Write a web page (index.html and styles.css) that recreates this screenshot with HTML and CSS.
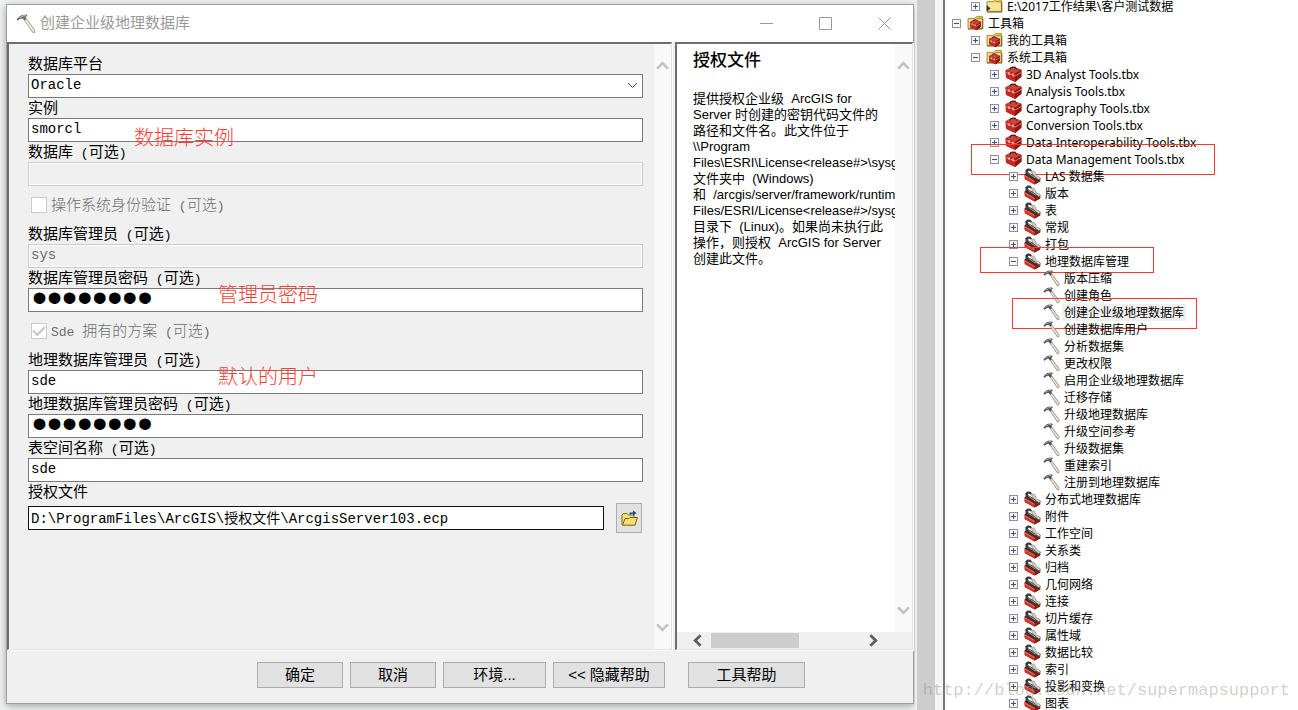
FILE: index.html
```html
<!DOCTYPE html>
<html lang="zh-CN">
<head>
<meta charset="utf-8">
<title>创建企业级地理数据库</title>
<link rel="stylesheet" href="styles.css">
</head>
<body>
<svg class="sprite" aria-hidden="true">
  <symbol id="i-hammer" viewBox="0 0 17 17">
    <path d="M7 5 8.8 4 16 13.6 15.9 15.6 14.4 15.9Z" fill="#d9cfb8" stroke="#857d6e" stroke-width=".7"/>
    <path d="M8.3 5.4 15 14.6" stroke="#f6f0df" stroke-width=".9"/>
    <path d="M.4 4.8C1.6 3 3.4 1.2 5.4.8L9.2.4 9.8 1.8 8.4 2.4 8.8 4.2 7.2 5.6 5.4 3.8 3 4.4 1.6 5.8Z" fill="#4c5256"/>
    <path d="M2.8 3.2 5.6 1.8 8.4 1.3" stroke="#b4babd" stroke-width=".8" fill="none"/>
  </symbol>
  <symbol id="i-box" viewBox="0 0 17 17">
    <path d="M.6 4.2 7.6.6 16.4 3.8V10.8L10.2 16 1 11.8Z" fill="#b3211a"/>
    <path d="M.6 4.2 7.6.8 16.4 3.8 10.2 7.4Z" fill="#cf4438"/>
    <path d="M.6 4.2 10.2 7.4V16L1 11.8Z" fill="#c5281f"/>
    <path d="M10.2 7.4 16.4 3.8V10.8L10.2 16Z" fill="#8c1610"/>
    <path d="M.8 6.4 10.2 10 16.4 6.4" stroke="#ee8a7c" stroke-width=".9" fill="none"/>
    <path d="M5 3.8 5.8 1.6 10 1.2 11.8 3.6" stroke="#3a2a2a" stroke-width="1.1" fill="none"/>
    <path d="M4 6V9M8 7.4V10.4" stroke="#e8dcd8" stroke-width="1"/>
  </symbol>
  <symbol id="i-set" viewBox="0 0 17 17">
    <path d="M.6 6 4 4.2 16.2 10.4V13.4L10.6 16.6.8 11Z" fill="#5a2521"/>
    <path d="M.6 6.8 10.8 12.8V16.5L.8 11.2Z" fill="#cf3426"/>
    <path d="M10.8 12.8 16.2 10V13.2L10.8 16.5Z" fill="#8e1b13"/>
    <path d="M1.2 2.4 3.4.6 6.6.8 8 2.8 6.4 3.6 4.8 2.6 3.6 4.2 14.6 11.2 12.4 12.4 2 6.4Z" fill="#34383a"/>
    <path d="M7.4 3.4 9.8 3 11.4 5.2 12.4 8 15.8 9.2 16.4 10.8 14.6 11.6 12.2 9.8 9 6.8Z" fill="#d8d2c2" stroke="#77736a" stroke-width=".6"/>
    <path d="M4.4 5.2 11.4 10" stroke="#a9adad" stroke-width=".9"/>
    <path d="M1 8 10.6 13.6" stroke="#f08c7d" stroke-width=".7"/>
  </symbol>
  <symbol id="i-folder" viewBox="0 0 17 17">
    <path d="M1 3.4H8L9.4 1.4H15.4V13.6H1Z" fill="#eed26c" stroke="#a68a34" stroke-width=".9"/>
    <path d="M2 5H14.6V12.6H2Z" fill="#f6e498"/>
    <path d="M9.6 3.4H15" stroke="#a98b2c"/>
    <path d="M1 14H15.8V4" stroke="#6f5d24" fill="none"/>
  </symbol>
  <symbol id="i-link" viewBox="0 0 17 17">
    <use href="#i-folder"/>
    <path d="M.6 7 4.6 10.4 .6 13.6Z" fill="#333"/>
  </symbol>
  <symbol id="i-folderbox" viewBox="0 0 17 17">
    <use href="#i-folder"/>
    <use href="#i-box" x="2" y="4" width="13" height="12"/>
  </symbol>
  <symbol id="i-up" viewBox="0 0 13 9"><path d="M1.2 7.6 6.5 2.2 11.8 7.6" fill="none" stroke="currentColor" stroke-width="2.6"/></symbol>
  <symbol id="i-left" viewBox="0 0 9 13"><path d="M7.6 1.2 2.2 6.5 7.6 11.8" fill="none" stroke="currentColor" stroke-width="2.8"/></symbol>
</svg>

<main class="backdrop">
  <section class="dialog" aria-label="创建企业级地理数据库">
    <header class="titlebar">
      <svg class="title-icon"><use href="#i-hammer"/></svg>
      <h1 class="title">创建企业级地理数据库</h1>
      <div class="controls">
        <button type="button" class="ctl" aria-label="最小化"><svg viewBox="0 0 13 13"><path d="M0 6.5H13"/></svg></button>
        <button type="button" class="ctl" aria-label="最大化"><svg viewBox="0 0 13 13"><path d="M.5.5H12.5V12.5H.5Z"/></svg></button>
        <button type="button" class="ctl" aria-label="关闭"><svg viewBox="0 0 13 13"><path d="M.5.5 12.5 12.5M12.5.5.5 12.5"/></svg></button>
      </div>
    </header>

    <div class="panes">
      <div class="pane pane-form">
        <form class="form" id="tool">
          <div class="field">
            <label for="platform">数据库平台</label>
            <div class="select">
              <select id="platform"><option>Oracle</option></select>
              <svg class="chevron" viewBox="0 0 11 7"><path d="M1 1 5.5 5.5 10 1"/></svg>
            </div>
          </div>
          <div class="field">
            <label for="instance">实例</label>
            <input id="instance" type="text" value="smorcl">
            <span class="note note-near">数据库实例</span>
          </div>
          <div class="field">
            <label for="db">数据库<span class="opt"> (</span>可选<span class="opt">)</span></label>
            <input id="db" type="text" disabled>
          </div>
          <div class="check">
            <input id="osauth" type="checkbox" disabled>
            <label for="osauth">操作系统身份验证<span class="opt"> (</span>可选<span class="opt">)</span></label>
          </div>
          <div class="field">
            <label for="dba">数据库管理员<span class="opt"> (</span>可选<span class="opt">)</span></label>
            <input id="dba" type="text" value="sys" disabled>
          </div>
          <div class="field">
            <label for="dbapw">数据库管理员密码<span class="opt"> (</span>可选<span class="opt">)</span></label>
            <input id="dbapw" type="password" value="password">
            <span class="note note-far">管理员密码</span>
          </div>
          <div class="check">
            <input id="sdeschema" type="checkbox" checked disabled>
            <label for="sdeschema"><span class="opt">Sde </span>拥有的方案<span class="opt"> (</span>可选<span class="opt">)</span></label>
          </div>
          <div class="field">
            <label for="gdba">地理数据库管理员<span class="opt"> (</span>可选<span class="opt">)</span></label>
            <input id="gdba" type="text" value="sde">
            <span class="note note-far">默认的用户</span>
          </div>
          <div class="field">
            <label for="gdbapw">地理数据库管理员密码<span class="opt"> (</span>可选<span class="opt">)</span></label>
            <input id="gdbapw" type="password" value="password">
          </div>
          <div class="field">
            <label for="tablespace">表空间名称<span class="opt"> (</span>可选<span class="opt">)</span></label>
            <input id="tablespace" type="text" value="sde">
          </div>
          <div class="field">
            <label for="authfile">授权文件</label>
            <div class="file">
              <input id="authfile" class="active" type="text" value="D:\ProgramFiles\ArcGIS\授权文件\ArcgisServer103.ecp">
              <button type="button" class="browse" aria-label="浏览">
                <svg viewBox="0 0 17 17">
                  <path d="M1 15V5L2.5 3.5H6L7.5 5H13V8" fill="#f3dc7c" stroke="#8b6d12"/>
                  <path d="M1.5 15.2 4 8.5H8L9 7.5H16.4L14 15.2Z" fill="#f5dc73" stroke="#7a5d0b"/>
                  <path d="M8.5 4.5V2.5H12V.5L15.5 3 12 5.8V3.8" fill="#0d4d8c"/>
                </svg>
              </button>
            </div>
          </div>
        </form>
        <div class="vbar">
          <svg class="arr"><use href="#i-up"/></svg>
          <svg class="arr flip"><use href="#i-up"/></svg>
        </div>
      </div>

      <aside class="pane pane-help">
        <div class="help-main">
          <article class="help">
            <h2>授权文件</h2>
            <p>提供授权企业级&nbsp; ArcGIS for<br>Server 时创建的密钥代码文件的<br>路径和文件名。此文件位于<br>\\Program<br>Files\ESRI\License&lt;release#&gt;\sysgen<br>文件夹中&nbsp; (Windows)<br>和&nbsp; /arcgis/server/framework/runtime/<br>Files/ESRI/License&lt;release#&gt;/sysgen<br>目录下&nbsp; (Linux)。如果尚未执行此<br>操作，则授权&nbsp; ArcGIS for Server<br>创建此文件。</p>
          </article>
          <div class="vbar">
            <svg class="arr"><use href="#i-up"/></svg>
            <svg class="arr flip"><use href="#i-up"/></svg>
          </div>
        </div>
        <div class="hbar">
          <svg class="harr"><use href="#i-left"/></svg>
          <div class="track"><div class="thumb"></div></div>
          <svg class="harr flip"><use href="#i-left"/></svg>
        </div>
      </aside>
    </div>

    <footer class="footer">
      <button type="submit" form="tool" class="btn">确定</button>
      <button type="button" class="btn">取消</button>
      <button type="button" class="btn btn-env">环境...</button>
      <button type="button" class="btn btn-hide">&lt;&lt; 隐藏帮助</button>
      <button type="button" class="btn btn-help">工具帮助</button>
    </footer>
  </section>
</main>

<div class="splitter"></div>

<nav class="catalog" aria-label="目录">
  <ul class="tree">
    <li><ul>
      <li><div class="row"><button class="exp plus" aria-label="展开"></button><svg class="ico"><use href="#i-link"/></svg>E:\2017工作结果\客户测试数据</div></li>
    </ul></li>
    <li><div class="row"><button class="exp" aria-label="折叠"></button><svg class="ico"><use href="#i-folderbox"/></svg>工具箱</div>
    <ul>
      <li><div class="row"><button class="exp plus" aria-label="展开"></button><svg class="ico"><use href="#i-folderbox"/></svg>我的工具箱</div></li>
      <li><div class="row"><button class="exp" aria-label="折叠"></button><svg class="ico"><use href="#i-folderbox"/></svg>系统工具箱</div>
      <ul>
        <li><div class="row"><button class="exp plus" aria-label="展开"></button><svg class="ico"><use href="#i-box"/></svg>3D Analyst Tools.tbx</div></li>
        <li><div class="row"><button class="exp plus" aria-label="展开"></button><svg class="ico"><use href="#i-box"/></svg>Analysis Tools.tbx</div></li>
        <li><div class="row"><button class="exp plus" aria-label="展开"></button><svg class="ico"><use href="#i-box"/></svg>Cartography Tools.tbx</div></li>
        <li><div class="row"><button class="exp plus" aria-label="展开"></button><svg class="ico"><use href="#i-box"/></svg>Conversion Tools.tbx</div></li>
        <li><div class="row"><button class="exp plus" aria-label="展开"></button><svg class="ico"><use href="#i-box"/></svg>Data Interoperability Tools.tbx</div></li>
        <li><div class="row"><button class="exp" aria-label="折叠"></button><svg class="ico"><use href="#i-box"/></svg>Data Management Tools.tbx<span class="mark mark-toolbox"></span></div>
        <ul>
          <li><div class="row"><button class="exp plus" aria-label="展开"></button><svg class="ico"><use href="#i-set"/></svg>LAS 数据集</div></li>
          <li><div class="row"><button class="exp plus" aria-label="展开"></button><svg class="ico"><use href="#i-set"/></svg>版本</div></li>
          <li><div class="row"><button class="exp plus" aria-label="展开"></button><svg class="ico"><use href="#i-set"/></svg>表</div></li>
          <li><div class="row"><button class="exp plus" aria-label="展开"></button><svg class="ico"><use href="#i-set"/></svg>常规</div></li>
          <li><div class="row"><button class="exp plus" aria-label="展开"></button><svg class="ico"><use href="#i-set"/></svg>打包</div></li>
          <li><div class="row"><button class="exp" aria-label="折叠"></button><svg class="ico"><use href="#i-set"/></svg>地理数据库管理<span class="mark mark-set"></span></div>
          <ul class="tools">
            <li><div class="row"><svg class="ico"><use href="#i-hammer"/></svg>版本压缩</div></li>
            <li><div class="row"><svg class="ico"><use href="#i-hammer"/></svg>创建角色</div></li>
            <li><div class="row"><svg class="ico"><use href="#i-hammer"/></svg><span class="selected">创建企业级地理数据库</span><span class="mark mark-tool"></span></div></li>
            <li><div class="row"><svg class="ico"><use href="#i-hammer"/></svg>创建数据库用户</div></li>
            <li><div class="row"><svg class="ico"><use href="#i-hammer"/></svg>分析数据集</div></li>
            <li><div class="row"><svg class="ico"><use href="#i-hammer"/></svg>更改权限</div></li>
            <li><div class="row"><svg class="ico"><use href="#i-hammer"/></svg>启用企业级地理数据库</div></li>
            <li><div class="row"><svg class="ico"><use href="#i-hammer"/></svg>迁移存储</div></li>
            <li><div class="row"><svg class="ico"><use href="#i-hammer"/></svg>升级地理数据库</div></li>
            <li><div class="row"><svg class="ico"><use href="#i-hammer"/></svg>升级空间参考</div></li>
            <li><div class="row"><svg class="ico"><use href="#i-hammer"/></svg>升级数据集</div></li>
            <li><div class="row"><svg class="ico"><use href="#i-hammer"/></svg>重建索引</div></li>
            <li><div class="row"><svg class="ico"><use href="#i-hammer"/></svg>注册到地理数据库</div></li>
          </ul></li>
          <li><div class="row"><button class="exp plus" aria-label="展开"></button><svg class="ico"><use href="#i-set"/></svg>分布式地理数据库</div></li>
          <li><div class="row"><button class="exp plus" aria-label="展开"></button><svg class="ico"><use href="#i-set"/></svg>附件</div></li>
          <li><div class="row"><button class="exp plus" aria-label="展开"></button><svg class="ico"><use href="#i-set"/></svg>工作空间</div></li>
          <li><div class="row"><button class="exp plus" aria-label="展开"></button><svg class="ico"><use href="#i-set"/></svg>关系类</div></li>
          <li><div class="row"><button class="exp plus" aria-label="展开"></button><svg class="ico"><use href="#i-set"/></svg>归档</div></li>
          <li><div class="row"><button class="exp plus" aria-label="展开"></button><svg class="ico"><use href="#i-set"/></svg>几何网络</div></li>
          <li><div class="row"><button class="exp plus" aria-label="展开"></button><svg class="ico"><use href="#i-set"/></svg>连接</div></li>
          <li><div class="row"><button class="exp plus" aria-label="展开"></button><svg class="ico"><use href="#i-set"/></svg>切片缓存</div></li>
          <li><div class="row"><button class="exp plus" aria-label="展开"></button><svg class="ico"><use href="#i-set"/></svg>属性域</div></li>
          <li><div class="row"><button class="exp plus" aria-label="展开"></button><svg class="ico"><use href="#i-set"/></svg>数据比较</div></li>
          <li><div class="row"><button class="exp plus" aria-label="展开"></button><svg class="ico"><use href="#i-set"/></svg>索引</div></li>
          <li><div class="row"><button class="exp plus" aria-label="展开"></button><svg class="ico"><use href="#i-set"/></svg>投影和变换</div></li>
          <li><div class="row"><button class="exp plus" aria-label="展开"></button><svg class="ico"><use href="#i-set"/></svg>图表</div></li>
        </ul></li>
      </ul></li>
    </ul></li>
  </ul>
</nav>
<div class="watermark">http://blog.csdn.net/supermapsupport</div>
</body>
</html>
```
FILE: styles.css
```css
* { box-sizing: border-box; }
body {
  position: relative;
  display: flex;
  height: 100vh;
  margin: 0;
  overflow: hidden;
  background: #fff;
  color: #000;
  font-family: "Liberation Sans", "Noto Sans CJK SC", sans-serif;
  font-size: 15px;
}
ul { list-style: none; margin: 0; padding: 0; }
h1, h2, p { margin: 0; }
button, input, select { margin: 0; font: inherit; color: inherit; }
.sprite { position: absolute; width: 0; height: 0; }

/* window area */
.backdrop {
  display: flex;
  flex: 1;
  min-width: 0;
  padding: 4px 1px 6px 6px;
  background: #f1f4f3;
}
.dialog {
  display: flex;
  flex: 1;
  flex-direction: column;
  min-width: 0;
  border: 1px solid #a0a0a0;
  background: #f0f0f0;
  box-shadow: 0 2px 8px rgba(0, 0, 0, .35);
}
.titlebar {
  display: flex;
  align-items: center;
  height: 37px;
  padding: 0 22px 0 9px;
  background: #fff;
}
.title-icon { width: 20px; height: 20px; margin-right: 4px; opacity: .8; }
.title { flex: 1; color: #999; font-size: 15px; font-weight: 400; line-height: 20px; padding-bottom: 2px; }
.controls { display: flex; gap: 46px; }
.ctl { width: 13px; height: 13px; padding: 0; border: 0; background: none; }
.ctl svg { display: block; width: 13px; height: 13px; fill: none; stroke: #999; }

.panes { display: flex; flex: 1; gap: 3px; min-height: 0; }
.pane {
  display: flex;
  min-width: 0;
  border: solid;
  border-width: 2px 1px 1px 2px;
  border-color: #6e6e6e #e3e3e3 #e3e3e3 #6e6e6e;
  box-shadow: 1px 1px 0 #fff;
}
.pane-form { flex: 1; }
.pane-help { flex: 0 0 238px; flex-direction: column; background: #fff; }

/* form */
.form { flex: 1; min-width: 0; padding: 10px 11px 0 19px; }
.field { position: relative; }
.field > label { display: block; height: 20px; line-height: 20px; white-space: pre; }
.opt { font-family: "Liberation Mono", monospace; font-size: 13px; white-space: pre; }
.field input, .select select {
  display: block;
  width: 100%;
  height: 24px;
  padding: 0 2px 3px;
  border: 1px solid #7a7a7a;
  border-radius: 0;
  outline: 0;
  background: #fff;
  font-family: "Liberation Mono", "Noto Sans CJK SC", monospace;
  font-size: 14px;
}
.field input:disabled {
  border-color: #ccc;
  background: #f0f0f0;
  box-shadow: inset 0 0 0 1px #fff;
  color: #6d6d6d;
}
.field input[type="password"] { padding: 0 3px 6px; font-family: "Liberation Sans", sans-serif; font-size: 43px; }
.select { position: relative; }
.select select { appearance: none; }
.chevron { position: absolute; top: 8px; right: 5px; width: 11px; height: 7px; fill: none; stroke: #444; }
.check { display: flex; align-items: center; gap: 4px; height: 38px; padding-left: 3px; color: #6d6d6d; }
.check label { padding-bottom: 3px; font-weight: 300; }
.check input {
  display: grid;
  width: 16px;
  height: 16px;
  border: 1px solid #ccc;
  background: #fff;
  appearance: none;
  place-items: center;
}
.check input:checked::before {
  content: "";
  width: 10px;
  height: 5px;
  border: solid #c4c4c4;
  border-width: 0 0 2px 2px;
  transform: translateY(-2px) rotate(-45deg);
}
.file { display: flex; align-items: center; gap: 12px; padding-top: 1px; padding-right: 1px; }
.file .active { flex: 1; min-width: 0; border-color: #111; }
.browse { display: grid; width: 26px; height: 30px; padding: 0; border: 1px solid #adadad; background: #e1e1e1; place-items: center; }
.browse svg { width: 17px; height: 17px; }
.note { position: absolute; color: #ff3c32; font-size: 20px; font-weight: 300; line-height: 30px; }
.note-near { top: 25px; left: 106px; }
.note-far { top: 12px; left: 190px; }

/* scroll bars */
.vbar {
  display: flex;
  flex: 0 0 17px;
  flex-direction: column;
  align-items: center;
  justify-content: space-between;
  padding: 17px 0;
  background: #f9f9f9;
  color: #c2c2c2;
}
.arr { width: 13px; height: 9px; }
.flip { transform: rotate(180deg); }
.hbar { display: flex; align-items: center; height: 17px; padding: 0 34px 0 16px; background: #f0f0f0; color: #5f5f5f; }
.harr { width: 9px; height: 13px; }
.track { flex: 1; margin: 0 9px; }
.thumb { width: 59%; height: 15px; background: #cdcdcd; }

/* help */
.help-main { display: flex; flex: 1; min-height: 0; }
.help { flex: 1; min-width: 0; padding: 6px 0 0 16px; overflow: hidden; white-space: nowrap; }
.help h2 { font-size: 17px; font-weight: 500; line-height: 22px; }
.help p { margin-top: 19px; font-size: 13px; line-height: 16px; }

/* footer */
.footer { display: flex; justify-content: flex-end; gap: 7px; padding: 12px 108px 15px 0; }
.btn { width: 86px; height: 26px; padding: 0 0 4px; border: 1px solid #adadad; background: #e1e1e1; }
.btn-env { width: 103px; }
.btn-hide { width: 112px; }
.btn-help { width: 117px; margin-left: 16px; }

.splitter { flex: 0 0 28px; border: solid; border-width: 0 8px 0 2px; border-color: #f5f5f5 #f5f5f5 #f5f5f5 #ededed; background: #cdcdcd; }

/* catalog tree */
.catalog {
  flex: 0 0 355px;
  overflow: hidden;
  border-left: 2px solid #777;
  background: #fff;
  font-family: "Noto Sans", "Noto Sans CJK SC", sans-serif;
  font-size: 12px;
}
.tree { margin-top: -2px; padding-left: 7px; }
.tree ul { padding-left: 19px; }
.row { position: relative; display: flex; align-items: center; height: 17px; line-height: 17px; white-space: nowrap; }
.exp {
  flex: 0 0 9px;
  height: 9px;
  margin-right: 6px;
  padding: 0;
  border: 1px solid #919191;
  background: linear-gradient(#3a4f9a, #3a4f9a) center / 5px 1px no-repeat, #f6f6f6;
}
.exp.plus {
  background: linear-gradient(#3a4f9a, #3a4f9a) center / 5px 1px no-repeat, linear-gradient(#3a4f9a, #3a4f9a) center / 1px 5px no-repeat, #f6f6f6;
}
.ico { flex: 0 0 17px; height: 17px; margin-right: 4px; }
.tools .ico { margin-left: 15px; }
.selected { margin: 0 -2px; padding: 0 2px; background: #f0f0f0; }
.mark { position: absolute; border: 1px solid #f43a34; }
.mark-toolbox { top: -7px; left: -19px; width: 244px; height: 31px; }
.mark-set { top: -6px; left: -29px; width: 174px; height: 26px; }
.mark-tool { top: -6px; left: -16px; width: 185px; height: 31px; }

.watermark {
  position: absolute;
  right: 8px;
  bottom: 8px;
  color: rgba(150, 150, 140, .45);
  font-family: "Liberation Mono", monospace;
  font-size: 17px;
  line-height: 22px;
}
```
